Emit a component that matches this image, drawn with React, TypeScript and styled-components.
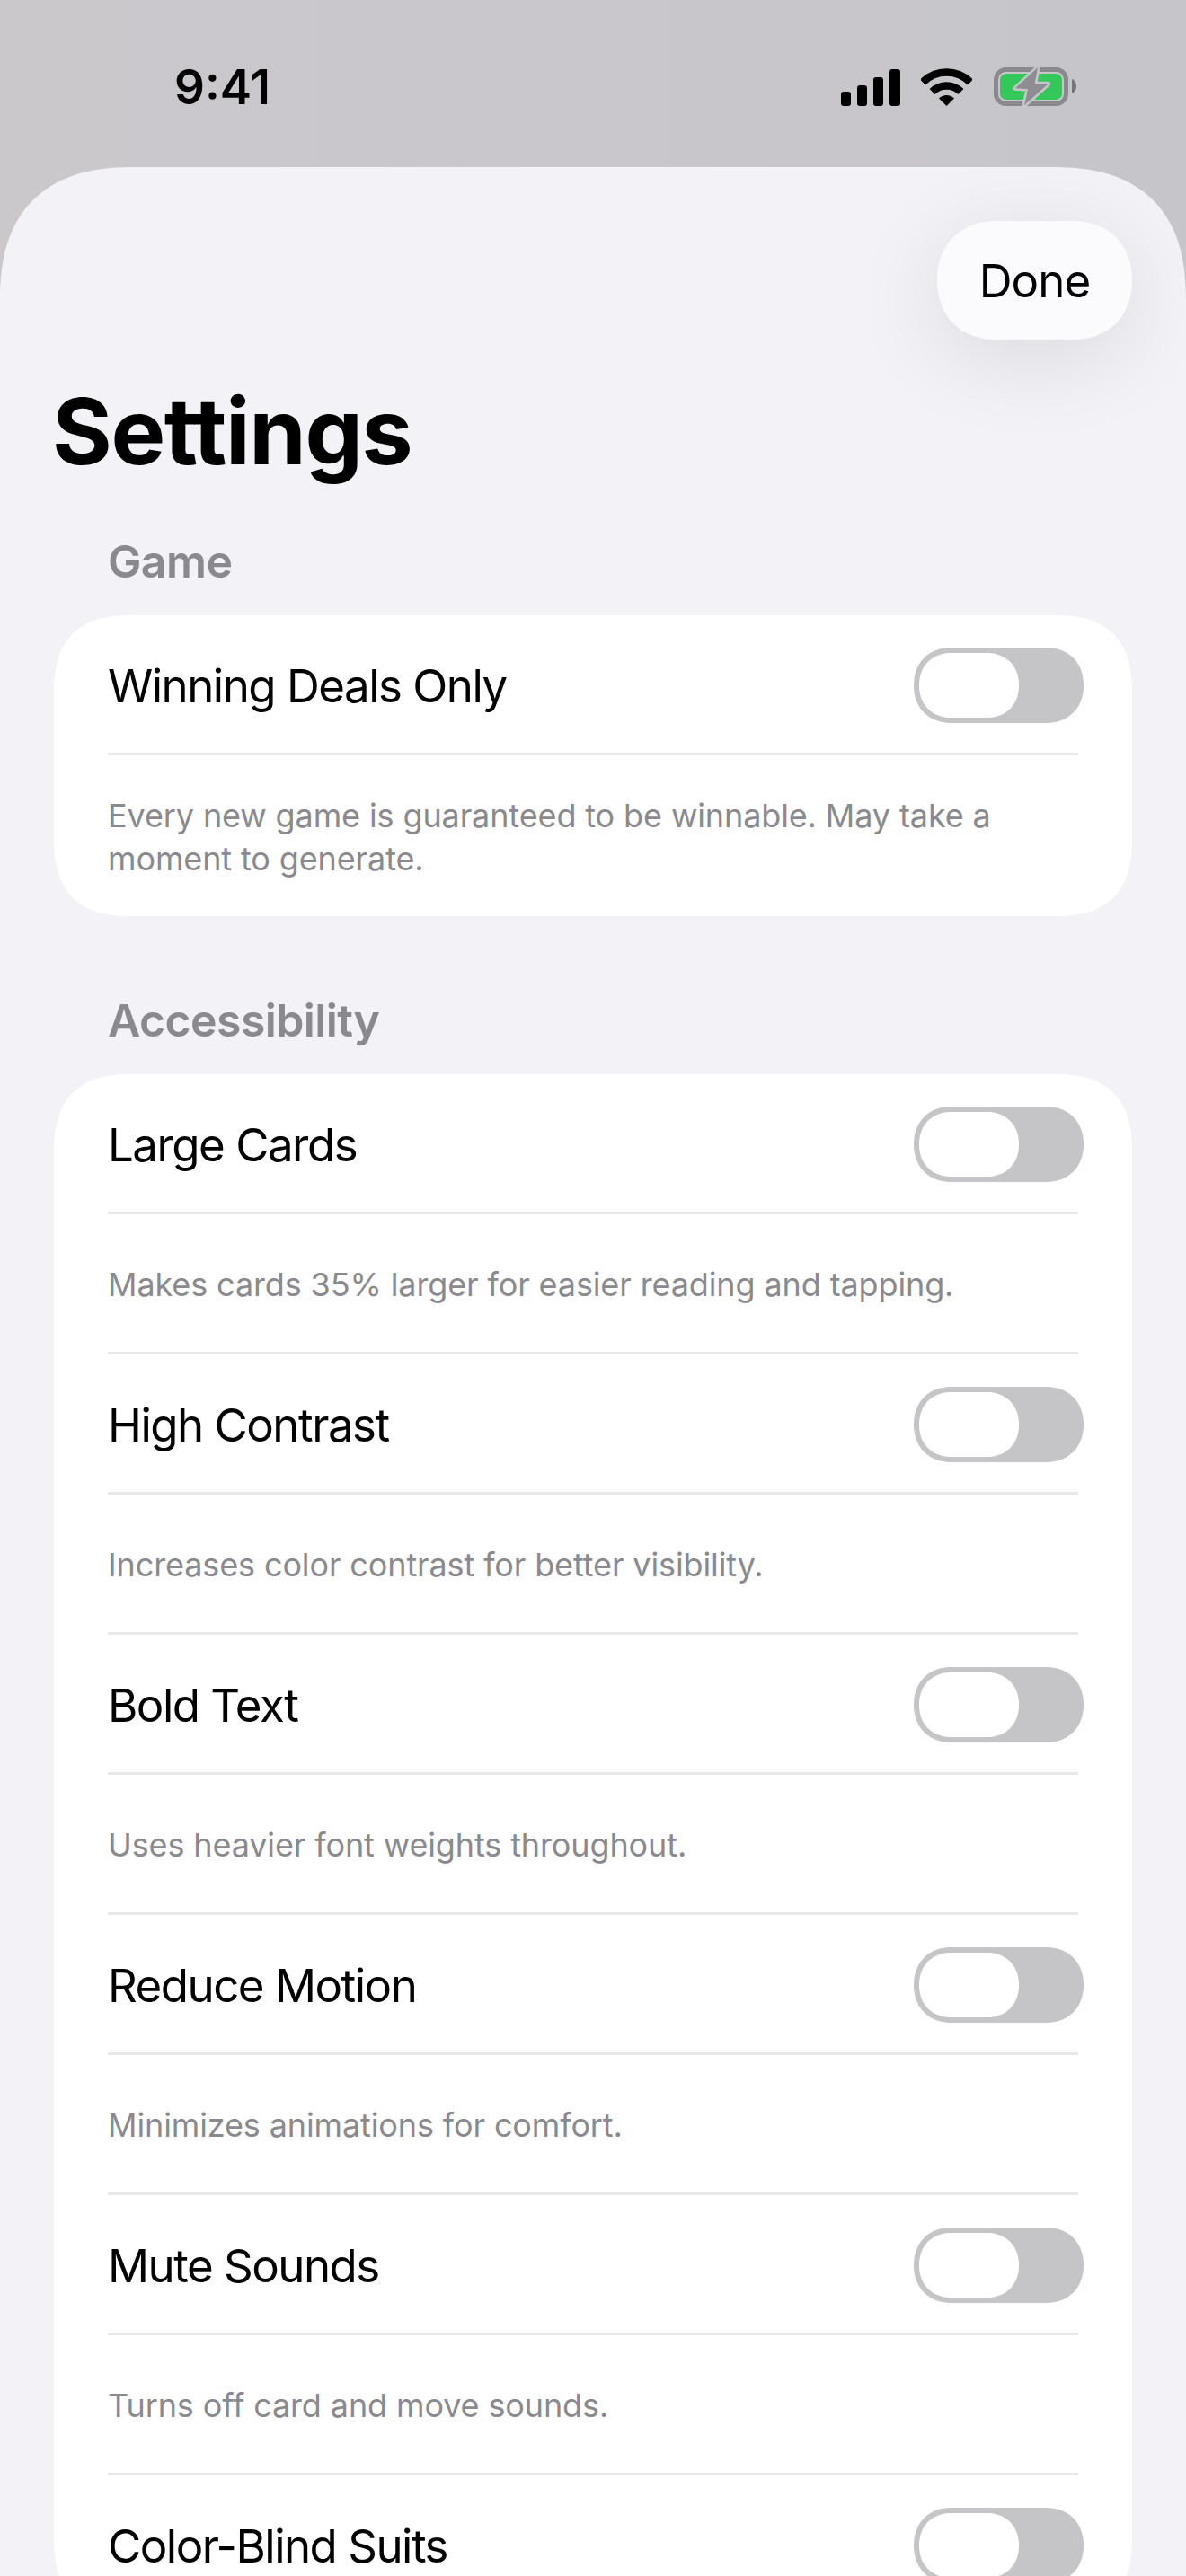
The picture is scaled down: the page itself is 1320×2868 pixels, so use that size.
import React from 'react';
import styled, { createGlobalStyle } from 'styled-components';

const GlobalStyle = createGlobalStyle`
  html, body {
    margin: 0;
    padding: 0;
    height: 2868px;
    overflow: hidden;
    background: #c8c6cb;
    font-family: Inter, "Liberation Sans", sans-serif;
    -webkit-font-smoothing: antialiased;
  }
  * {
    box-sizing: border-box;
  }
`;

const sections = [
  {
    title: 'Game',
    items: [
      {
        label: 'Winning Deals Only',
        hint: 'Every new game is guaranteed to be winnable. May take a moment to generate.',
      },
    ],
  },
  {
    title: 'Accessibility',
    items: [
      { label: 'Large Cards', hint: 'Makes cards 35% larger for easier reading and tapping.' },
      { label: 'High Contrast', hint: 'Increases color contrast for better visibility.' },
      { label: 'Bold Text', hint: 'Uses heavier font weights throughout.' },
      { label: 'Reduce Motion', hint: 'Minimizes animations for comfort.' },
      { label: 'Mute Sounds', hint: 'Turns off card and move sounds.' },
      { label: 'Color-Blind Suits' },
    ],
  },
];

function StatusIcons() {
  return (
    <Icons>
      <svg width="66" height="41" viewBox="0 0 66 41">
        <rect x="0" y="25" width="11" height="16" rx="3" />
        <rect x="18" y="18" width="11" height="23" rx="3" />
        <rect x="36" y="9" width="11" height="32" rx="3" />
        <rect x="54" y="0" width="12" height="41" rx="3" />
      </svg>
      <svg width="57" height="42" viewBox="0 0 57 42">
        <path d="M2 15.5 A37.5 37.5 0 0 1 55 15.5" fill="none" stroke="#000" strokeWidth="8.5" />
        <path d="M12.6 26.1 A22.5 22.5 0 0 1 44.4 26.1" fill="none" stroke="#000" strokeWidth="8.5" />
        <path d="M20 33.5 A12 12 0 0 1 37 33.5 L28.5 42 Z" />
      </svg>
      <svg width="93" height="48" viewBox="0 0 93 48">
        <rect x="3.5" y="4.5" width="78" height="38" rx="11" fill="none" stroke="#8a898d" strokeWidth="5" />
        <rect x="8" y="9" width="69" height="29" rx="7" fill="#34c759" />
        <path d="M88 15 C91 16 93 19 93 23 C93 27 91 30 88 31 Z" fill="#77767a" />
        <path
          d="M50 2 L25 25.3 L39 26.3 L35 44.3 L61.7 20.3 L46.7 20.3 Z"
          fill="#8e8d92"
          stroke="#c8c6cb"
          strokeWidth="5"
          strokeLinejoin="round"
          paintOrder="stroke"
        />
      </svg>
    </Icons>
  );
}

function App() {
  return (
    <Page>
      <GlobalStyle />
      <StatusBar>
        <Time>9:41</Time>
        <StatusIcons />
      </StatusBar>
      <Sheet>
        <NavBar>
          <DoneButton>Done</DoneButton>
        </NavBar>
        <Title>Settings</Title>
        {sections.map((section) => (
          <Section key={section.title}>
            <SectionTitle>{section.title}</SectionTitle>
            <Card>
              {section.items.map((item, i) => (
                <Item key={item.label} first={i === 0}>
                  <Row>
                    <Label>{item.label}</Label>
                    <Toggle>
                      <Knob />
                    </Toggle>
                  </Row>
                  {item.hint && <Hint>{item.hint}</Hint>}
                </Item>
              ))}
            </Card>
          </Section>
        ))}
      </Sheet>
    </Page>
  );
}

export default App;

const Page = styled.div`
  width: 1320px;
  height: 2868px;
  overflow: hidden;
  background: linear-gradient(90deg, #cbc8cc, #c6c5ca);
`;

const StatusBar = styled.div`
  height: 186px;
  display: flex;
  align-items: center;
  justify-content: space-between;
  padding: 0 122px 0 194px;
`;

const Time = styled.div`
  font-size: 53px;
  font-weight: 600;
  color: #000;
  line-height: 64px;
  margin-top: 8px;
`;

const Icons = styled.div`
  display: flex;
  align-items: center;
  gap: 23px;
  margin-top: 8px;
`;

const Sheet = styled.div`
  height: 2682px;
  background: #f2f2f7;
  border-radius: 124px 124px 0 0;
  padding: 60px 60px 0;
  overflow: hidden;
  @supports (corner-shape: squircle) {
    border-radius: 150px 150px 0 0;
    corner-shape: superellipse(1.3);
  }
`;

const NavBar = styled.div`
  display: flex;
  justify-content: flex-end;
`;

const DoneButton = styled.div`
  width: 217px;
  height: 132px;
  border-radius: 66px;
  background: #fbfbfe;
  display: flex;
  align-items: center;
  justify-content: center;
  font-size: 51px;
  letter-spacing: -0.9px;
  color: #000;
  box-shadow: 0 20px 100px rgba(0, 0, 0, 0.1);
  @supports (corner-shape: squircle) {
    corner-shape: superellipse(1.12);
  }
`;

const Title = styled.h1`
  margin: 40px 0 0 -2px;
  font-size: 102px;
  line-height: 124px;
  font-weight: 700;
  letter-spacing: -1.4px;
  color: #000;
`;

const Section = styled.section`
  margin-top: 52px;
  margin-bottom: 85px;
  & + & {
    margin-top: 0;
  }
`;

const SectionTitle = styled.h2`
  margin: 0 0 29px 60px;
  font-size: 50px;
  line-height: 62px;
  font-weight: 600;
  letter-spacing: -0.6px;
  color: #8a8a8e;
`;

const Card = styled.div`
  background: #fff;
  border-radius: 74px;
  padding: 0 60px;
  @supports (corner-shape: squircle) {
    border-radius: 85px;
    corner-shape: superellipse(1.3);
  }
`;

const Item = styled.div<{ first: boolean }>`
  border-top: ${(props) => (props.first ? 'none' : '3px solid #e8e8ea')};
`;

const Row = styled.div`
  height: 156px;
  display: flex;
  align-items: center;
  justify-content: space-between;
  border-bottom: 3px solid #e8e8ea;
`;

const Label = styled.div`
  padding-top: 4px;
  font-size: 51px;
  letter-spacing: -1.5px;
  color: #000;
`;

const Toggle = styled.div`
  width: 189px;
  height: 84px;
  margin: 3px -6px 0 0;
  border-radius: 42px;
  background: #c5c5c7;
  padding: 6px;
  @supports (corner-shape: squircle) {
    corner-shape: superellipse(1.12);
  }
`;

const Knob = styled.div`
  width: 111px;
  height: 72px;
  border-radius: 36px;
  background: #fff;
  @supports (corner-shape: squircle) {
    corner-shape: superellipse(1.12);
  }
`;

const Hint = styled.div`
  min-height: 153px;
  padding: 43px 0 40px;
  display: flex;
  align-items: center;
  font-size: 36px;
  line-height: 48px;
  letter-spacing: -0.12px;
  color: #8a8a8e;
`;
